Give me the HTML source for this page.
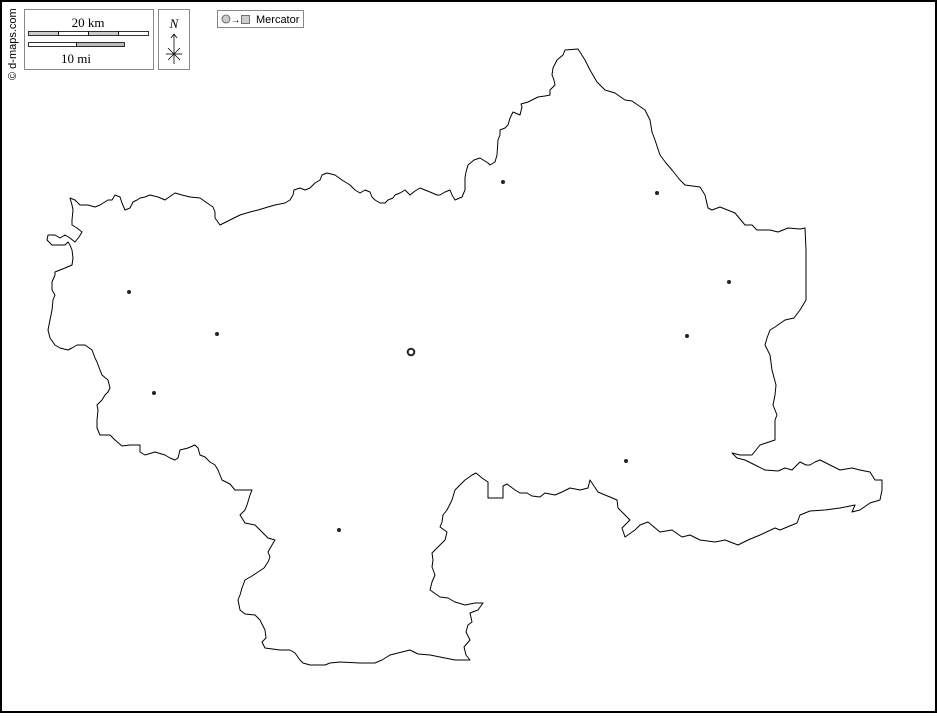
<!DOCTYPE html>
<html><head><meta charset="utf-8"><style>
html,body{margin:0;padding:0;background:#fff}
body{width:937px;height:713px;overflow:hidden}
</style></head><body>
<svg width="937" height="713" viewBox="0 0 937 713" xmlns="http://www.w3.org/2000/svg">
<rect x="1" y="1" width="935" height="711" fill="#fff" stroke="#000" stroke-width="2"/>
<path fill="none" stroke="#000" stroke-width="1" stroke-linejoin="round" d="M565,50 L578,49 L585,60 L590,70 L597,82 L605,90 L615,93 L625,100 L632,101 L645,110 L650,120 L652,132 L655,140 L660,155 L666,163 L672,170 L680,180 L685,185 L700,187 L705,195 L708,208 L712,210 L720,207 L735,213 L745,225 L752,225 L757,230 L770,230 L778,232 L788,228 L800,229 L805,228 L806,250 L806,300 L800,310 L794,318 L785,320 L775,327 L770,330 L767,338 L765,345 L770,355 L772,370 L776,385 L775,395 L773,405 L777,415 L775,420 L775,440 L760,445 L752,455 L745,455 L740,455 L732,453 L737,458 L745,460 L755,465 L765,470 L778,471 L785,468 L792,470 L800,462 L806,465 L810,465 L815,462 L820,460 L830,465 L840,470 L852,468 L860,470 L870,472 L875,480 L882,480 L882,490 L880,500 L870,503 L860,510 L852,512 L855,505 L840,508 L825,510 L810,511 L800,515 L797,523 L780,530 L775,528 L760,535 L748,540 L738,545 L725,540 L715,542 L700,540 L690,535 L682,537 L672,530 L660,532 L648,522 L640,525 L635,530 L625,537 L622,528 L630,520 L625,515 L618,508 L617,500 L610,497 L605,495 L598,492 L590,480 L588,488 L580,490 L570,488 L562,492 L555,495 L545,493 L540,497 L532,496 L527,493 L520,493 L515,490 L507,484 L503,486 L503,498 L488,498 L488,482 L482,478 L476,473 L472,475 L465,480 L455,490 L452,500 L447,510 L443,515 L442,522 L440,527 L447,532 L445,540 L437,548 L432,553 L433,560 L432,567 L435,575 L432,582 L430,590 L440,597 L448,598 L455,602 L465,605 L475,603 L483,603 L478,610 L470,613 L472,622 L468,625 L466,632 L470,640 L464,647 L466,655 L470,660 L460,660 L455,660 L445,658 L430,655 L418,654 L410,650 L398,653 L390,655 L382,660 L375,663 L360,663 L340,662 L330,663 L325,665 L310,665 L303,663 L300,660 L295,653 L290,650 L280,650 L265,648 L262,642 L266,638 L265,630 L260,620 L255,615 L245,614 L240,610 L238,600 L240,595 L242,588 L245,580 L252,576 L258,572 L264,568 L268,562 L270,557 L268,552 L272,545 L275,540 L268,538 L265,535 L258,528 L255,525 L245,523 L240,515 L245,510 L247,505 L250,495 L252,490 L240,490 L235,490 L230,484 L222,480 L218,470 L215,465 L210,462 L205,457 L200,455 L198,448 L195,445 L188,448 L180,450 L178,458 L175,460 L170,458 L165,455 L155,452 L145,455 L140,452 L140,445 L130,445 L122,446 L115,440 L110,435 L100,435 L97,428 L97,420 L98,410 L97,405 L102,400 L105,395 L108,392 L110,388 L108,380 L102,375 L100,370 L97,362 L95,358 L92,350 L85,345 L77,345 L72,348 L68,350 L60,348 L55,345 L50,338 L48,330 L50,320 L52,310 L53,300 L55,295 L52,290 L52,282 L55,275 L55,272 L65,268 L72,265 L73,258 L72,250 L70,245 L68,242 L65,245 L60,245 L52,245 L50,243 L47,240 L48,235 L55,235 L60,238 L65,235 L70,238 L75,242 L79,237 L82,232 L77,228 L72,225 L72,220 L73,210 L72,205 L70,198 L75,200 L80,205 L88,205 L95,207 L100,205 L108,200 L112,200 L115,195 L120,197 L122,203 L125,210 L130,208 L133,202 L137,200 L140,198 L145,197 L150,195 L158,197 L165,200 L172,195 L175,193 L182,195 L190,197 L200,198 L210,205 L213,207 L215,212 L215,218 L220,225 L230,220 L240,215 L250,212 L258,210 L268,207 L275,205 L285,203 L290,200 L293,195 L294,190 L300,188 L305,190 L310,188 L315,183 L320,180 L322,175 L327,173 L335,175 L342,180 L350,185 L355,190 L360,193 L365,190 L370,192 L372,197 L375,200 L380,203 L385,203 L388,200 L393,198 L395,195 L400,193 L405,190 L408,193 L410,195 L415,191 L420,188 L425,190 L430,192 L437,195 L440,195 L445,192 L450,190 L452,195 L455,200 L462,197 L465,190 L465,178 L466,172 L468,165 L474,160 L480,158 L488,163 L490,165 L495,162 L497,155 L498,140 L500,135 L500,130 L505,128 L508,125 L510,118 L513,112 L520,115 L522,107 L521,104 L528,102 L532,100 L538,97 L545,96 L550,95 L550,90 L555,85 L554,80 L552,75 L553,68 L557,60 L563,55 Z"/>
<g fill="#222">
<circle cx="129" cy="292" r="2"/><circle cx="217" cy="334" r="2"/><circle cx="154" cy="393" r="2"/>
<circle cx="339" cy="530" r="2"/><circle cx="503" cy="182" r="2"/><circle cx="657" cy="193" r="2"/>
<circle cx="729" cy="282" r="2"/><circle cx="687" cy="336" r="2"/><circle cx="626" cy="461" r="2"/>
</g>
<circle cx="411" cy="352" r="3.3" fill="none" stroke="#222" stroke-width="2"/>
<!-- scale box -->
<rect x="24.5" y="9.5" width="129" height="60" fill="#fff" stroke="#888" stroke-width="1"/>
<text x="88" y="27" font-family="Liberation Serif, serif" font-size="13" text-anchor="middle" fill="#000">20 km</text>
<rect x="28.5" y="31.5" width="30" height="4" fill="#ccc" stroke="#000" stroke-width="0.8"/>
<rect x="58.5" y="31.5" width="30" height="4" fill="#fff" stroke="#000" stroke-width="0.8"/>
<rect x="88.5" y="31.5" width="30" height="4" fill="#ccc" stroke="#000" stroke-width="0.8"/>
<rect x="118.5" y="31.5" width="30" height="4" fill="#fff" stroke="#000" stroke-width="0.8"/>
<rect x="28.5" y="42.5" width="48" height="4" fill="#fff" stroke="#000" stroke-width="0.8"/>
<rect x="76.5" y="42.5" width="48" height="4" fill="#bbb" stroke="#000" stroke-width="0.8"/>
<text x="76" y="63" font-family="Liberation Serif, serif" font-size="13" text-anchor="middle" fill="#000">10 mi</text>
<!-- north box -->
<rect x="158.5" y="9.5" width="31" height="60" fill="#fff" stroke="#888" stroke-width="1"/>
<text x="174" y="28" font-family="Liberation Serif, serif" font-size="13" font-style="italic" text-anchor="middle" fill="#000">N</text>
<g stroke="#000" stroke-width="0.8" fill="none">
<line x1="174" y1="34" x2="174" y2="64"/>
<path d="M171,38 L174,34 L177,38"/>
<line x1="166" y1="54" x2="182" y2="54"/>
<line x1="168" y1="48" x2="180" y2="60"/>
<line x1="180" y1="48" x2="168" y2="60"/>
</g>
<!-- mercator -->
<rect x="217.5" y="10.5" width="86" height="17" fill="#fff" stroke="#888" stroke-width="1"/>
<circle cx="226" cy="19" r="4" fill="#ccc" stroke="#555" stroke-width="0.8"/>
<text x="235.5" y="23" font-family="Liberation Sans, sans-serif" font-size="10" text-anchor="middle" fill="#000">→</text>
<rect x="241.5" y="15.5" width="8" height="8" fill="#ccc" stroke="#555" stroke-width="0.8"/>
<text x="256" y="23" font-family="Liberation Sans, sans-serif" font-size="11" fill="#000">Mercator</text>
<text transform="translate(16,80) rotate(-90)" font-family="Liberation Sans, sans-serif" font-size="11" fill="#000">© d-maps.com</text>
</svg>
</body></html>
